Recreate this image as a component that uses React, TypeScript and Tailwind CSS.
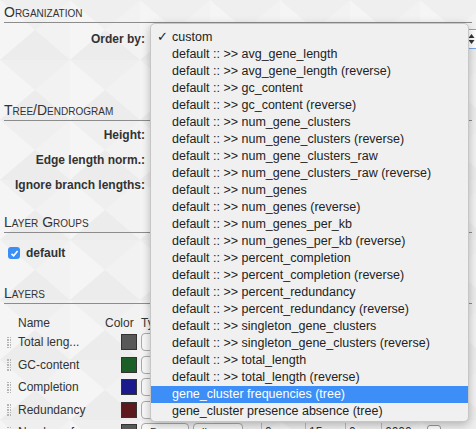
import React from 'react';

const options = [
  'custom',
  'default :: >> avg_gene_length',
  'default :: >> avg_gene_length (reverse)',
  'default :: >> gc_content',
  'default :: >> gc_content (reverse)',
  'default :: >> num_gene_clusters',
  'default :: >> num_gene_clusters (reverse)',
  'default :: >> num_gene_clusters_raw',
  'default :: >> num_gene_clusters_raw (reverse)',
  'default :: >> num_genes',
  'default :: >> num_genes (reverse)',
  'default :: >> num_genes_per_kb',
  'default :: >> num_genes_per_kb (reverse)',
  'default :: >> percent_completion',
  'default :: >> percent_completion (reverse)',
  'default :: >> percent_redundancy',
  'default :: >> percent_redundancy (reverse)',
  'default :: >> singleton_gene_clusters',
  'default :: >> singleton_gene_clusters (reverse)',
  'default :: >> total_length',
  'default :: >> total_length (reverse)',
  'gene_cluster frequencies (tree)',
  'gene_cluster presence absence (tree)',
];

const layers = [
  { name: 'Total leng...', color: 'bg-[#585858]' },
  { name: 'GC-content', color: 'bg-[#1b5e27]' },
  { name: 'Completion', color: 'bg-[#1a1a8c]' },
  { name: 'Redundancy', color: 'bg-[#5c1a1c]' },
  { name: 'Number of...', color: 'bg-[#585858]' },
];

const SectionTitle: React.FC<{ title: string; className?: string }> = ({ title, className }) => (
  <div className={`border-b border-[#8c8c8c] pb-[2px] text-[14px] leading-[16px] text-[#333] [font-variant:small-caps] ${className ?? ''}`}>
    {title}
  </div>
);

const Grip = () => (
  <div className="grid grid-cols-2 gap-x-[1px] gap-y-[1px] w-[4px] mr-[7px]">
    {Array.from({ length: 10 }).map((_, i) => (
      <span key={i} className="w-[1.5px] h-[1.5px] bg-[#b5b5b5]" />
    ))}
  </div>
);

export default function App() {
  return (
    <div className="relative w-[476px] h-[429px] overflow-hidden bg-[#efefef] font-['Liberation_Sans',Arial,sans-serif] text-[#333]">
      {/* faint triangle background */}
      <svg className="absolute inset-0" width="476" height="429">
        <defs>
          <pattern id="tri" width="70" height="60" patternUnits="userSpaceOnUse">
            <polygon points="0,0 35,30 0,60" fill="#f5f5f5" />
            <polygon points="70,0 35,30 70,60" fill="#f2f2f2" />
            <polygon points="0,60 35,30 70,60" fill="#ececec" />
          </pattern>
        </defs>
        <rect width="476" height="429" fill="url(#tri)" />
      </svg>

      <div className="relative px-[4px] pt-[4px]">
        <SectionTitle title="Organization" />
        <div className="flex items-center mt-[6px] h-[20px]">
          <div className="w-[141px] text-right text-[12px] font-bold">Order by:</div>
          <div className="ml-[5px] flex-1 h-[20px] -mr-[12px] rounded-[5px] border border-[#7aa7e8] bg-white flex justify-end items-center pr-[8px]">
            <svg width="7" height="12" viewBox="0 0 7 12">
              <polygon points="3.5,1 6.5,5 0.5,5" fill="#333" />
              <polygon points="3.5,11 6.5,7 0.5,7" fill="#333" />
            </svg>
          </div>
        </div>

        <SectionTitle title="Tree/Dendrogram" className="mt-[53px]" />
        <div className="flex flex-col mt-[1px] text-[12px] font-bold">
          <div className="h-[25px] flex items-center"><div className="w-[141px] text-right">Height:</div></div>
          <div className="h-[25px] flex items-center"><div className="w-[141px] text-right">Edge length norm.:</div></div>
          <div className="h-[25px] flex items-center"><div className="w-[141px] text-right">Ignore branch lengths:</div></div>
        </div>

        <SectionTitle title="Layer Groups" className="mt-[17px]" />
        <div className="flex items-center mt-[13px] h-[14px]">
          <div className="ml-[4px] w-[12px] h-[12px] rounded-[3px] bg-[#3b8ef5] flex items-center justify-center">
            <svg width="9" height="9" viewBox="0 0 9 9">
              <path d="M1.5 4.8 L3.6 6.8 L7.6 2" stroke="white" strokeWidth="1.6" fill="none" />
            </svg>
          </div>
          <span className="ml-[6px] text-[12px] font-bold">default</span>
        </div>

        <SectionTitle title="Layers" className="mt-[25px]" />
        <div className="flex items-center mt-[11px] h-[16px] text-[12px]">
          <span className="ml-[14px] w-[87px]">Name</span>
          <span className="w-[36px]">Color</span>
          <span>Type</span>
        </div>
        <div className="flex flex-col">
          {layers.map((l) => (
            <div key={l.name} className="flex items-center h-[22.5px] text-[12px]">
              <span className="ml-[3px]"><Grip /></span>
              <span className="w-[103px]">{l.name}</span>
              <span className={`w-[16px] h-[16px] border border-[#333] ${l.color}`} />
              <span className="ml-[4px] w-[48px] h-[18px] rounded-[4px] border border-[#aaa] bg-[#f8f8f8] text-[11px] px-[8px] leading-[16px]">Bars</span>
              <span className="ml-[4px] w-[50px] h-[18px] rounded-[4px] border border-[#aaa] bg-[#f8f8f8] text-[11px] px-[8px] leading-[16px]">linear</span>
              <span className="ml-[18px] w-[44px] border-l border-[#bbb] pl-[3px] h-[18px] leading-[18px]">0</span>
              <span className="w-[40px] border-l border-[#bbb] pl-[3px] h-[18px] leading-[18px]">15</span>
              <span className="w-[36px] border-l border-[#bbb] pl-[3px] h-[18px] leading-[18px]">0</span>
              <span className="w-[46px] border-l border-[#bbb] pl-[3px] h-[18px] leading-[18px]">6000</span>
              <span className="w-[14px] h-[14px] rounded-[3px] border border-[#999] bg-white" />
            </div>
          ))}
        </div>
      </div>

      {/* open select menu */}
      <div className="absolute left-[150px] top-[23px] w-[319px] h-[399px] pt-[5px] rounded-[5px] border border-[#c6c6c6] bg-[#f0f0f0] shadow-[0_3px_10px_rgba(0,0,0,0.25)] text-[12.5px] text-[#222]">
        {options.map((o, i) => (
          <div
            key={o}
            className={`relative h-[17px] leading-[17px] pl-[21px] whitespace-nowrap ${i === 21 ? 'bg-[#3d8ff7] text-white' : ''}`}
          >
            {i === 0 && <span className="absolute left-[6px] top-0">✓</span>}
            {o}
          </div>
        ))}
      </div>
    </div>
  );
}
